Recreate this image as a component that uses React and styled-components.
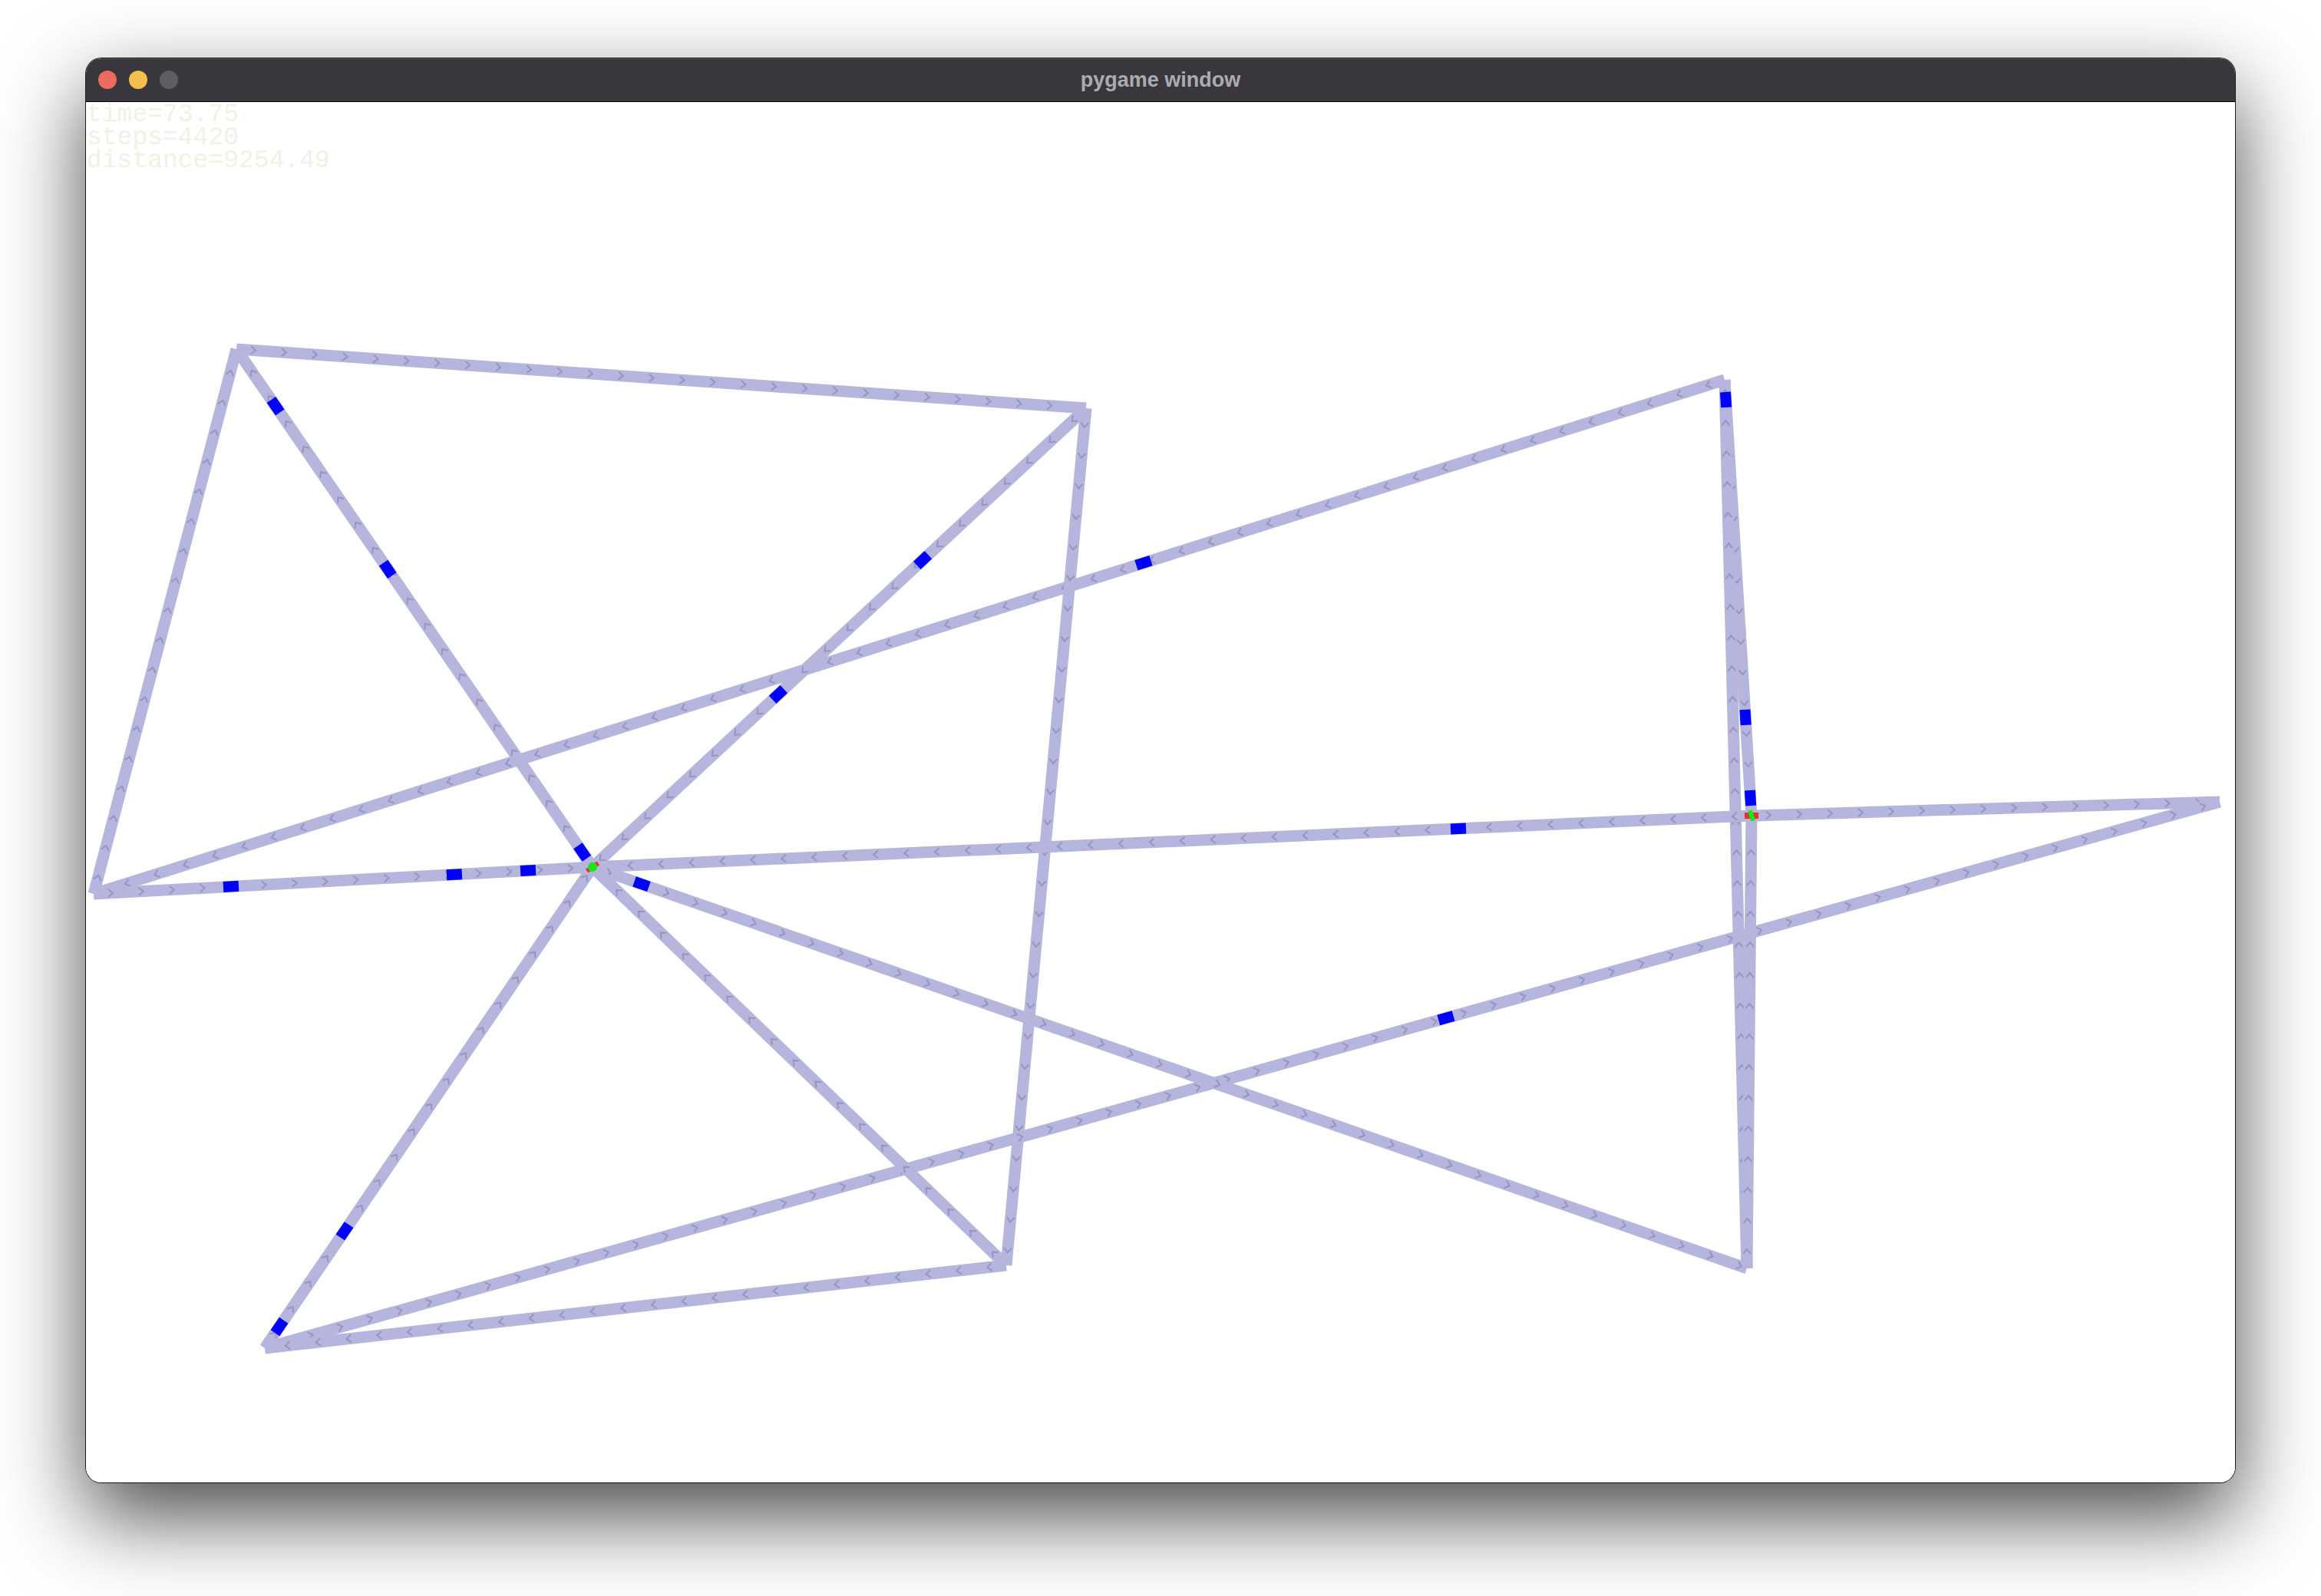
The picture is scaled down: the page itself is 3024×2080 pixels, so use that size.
import styled, { createGlobalStyle } from "styled-components";

const GlobalStyle = createGlobalStyle`
    html, body {
        margin: 0;
        padding: 0;
        background: #ffffff;
    }
`;

const Desktop = styled.div`
    width: 3024px;
    height: 2080px;
    box-sizing: border-box;
    padding: 76px 112px 148px;
    background: #ffffff;
    overflow: hidden;
`;

const Window = styled.div`
    width: 2800px;
    height: 1856px;
    border-radius: 20px;
    overflow: hidden;
    display: flex;
    flex-direction: column;
    background: #ffffff;
    box-shadow: 0 0 0 1px rgba(0, 0, 0, 0.85), 0 44px 110px rgba(0, 0, 0, 0.72);
`;

const TitleBar = styled.div`
    height: 56px;
    flex: none;
    display: grid;
    grid-template-columns: 1fr auto 1fr;
    align-items: center;
    padding: 0 16px;
    background: #39373d;
    border-bottom: 1px solid #0b0b0c;
    box-shadow: inset 0 1px 0 rgba(255, 255, 255, 0.12);
`;

const Lights = styled.div`
    display: flex;
    gap: 16px;
`;

const Light = styled.span`
    width: 24px;
    height: 24px;
    border-radius: 50%;
    background: ${(props) => props.color};
`;

const Title = styled.div`
    font-family: "Liberation Sans", Arial, sans-serif;
    font-weight: 700;
    font-size: 27px;
    color: #adabb1;
`;

const Canvas = styled.div`
    flex: 1;
    position: relative;
    background: #ffffff;
`;

const Stats = styled.pre`
    position: absolute;
    left: 1px;
    top: 2px;
    margin: 0;
    font-family: "Liberation Mono", "Courier New", monospace;
    font-size: 33px;
    line-height: 30px;
    color: #f2f2e4;
`;

const Graph = styled.svg`
    display: block;
    width: 100%;
    height: 100%;
`;

const nodes = {
    A: [308, 455],
    B: [1415, 532],
    C: [122, 1165],
    D: [772, 1130],
    E: [2247, 495],
    F: [2282, 1063],
    G: [2892, 1045],
    H: [1311, 1649],
    I: [2276, 1653],
    J: [345, 1757],
};

// from -> to (chevrons point along it)
const edges = [
    ["A", "B"],
    ["C", "A"],
    ["D", "A"],
    ["E", "C"],
    ["C", "D"],
    ["B", "D"],
    ["B", "H"],
    ["E", "F"],
    ["I", "E"],
    ["I", "F"],
    ["F", "D"],
    ["F", "G"],
    ["J", "G"],
    ["D", "I"],
    ["H", "D"],
    ["J", "D"],
    ["H", "J"],
];

const cars = [
    ["D", "A", 361, 528],
    ["D", "A", 505, 742],
    ["D", "A", 758, 1111],
    ["B", "D", 1203, 731],
    ["B", "D", 1014, 905],
    ["E", "C", 1491, 737],
    ["E", "F", 2248, 521],
    ["E", "F", 2272, 935],
    ["E", "F", 2281, 1040],
    ["C", "D", 301, 1157],
    ["C", "D", 592, 1142],
    ["C", "D", 688, 1134],
    ["D", "I", 836, 1152],
    ["F", "D", 1900, 1080],
    ["J", "G", 1884, 1327],
    ["J", "D", 447, 1603],
    ["J", "D", 364, 1729],
];

const LANE = "#b5b5dd";
const ARROW = "rgba(105, 105, 150, 0.42)";

const geom = (a, b) => {
    const [x1, y1] = nodes[a];
    const [x2, y2] = nodes[b];
    const dx = x2 - x1;
    const dy = y2 - y1;
    const len = Math.hypot(dx, dy);
    return { x1, y1, dx, dy, len, deg: (Math.atan2(dy, dx) * 180) / Math.PI };
};

const Lane = ({ from, to }) => {
    const g = geom(from, to);
    const marks = [];
    for (let s = 22; s < g.len - 10; s += 40) {
        const x = g.x1 + (g.dx * s) / g.len;
        const y = g.y1 + (g.dy * s) / g.len;
        marks.push(
            <polyline
                key={s}
                points="-3,-5 3,0 -3,5"
                transform={`translate(${x} ${y}) rotate(${g.deg})`}
                fill="none"
                stroke={ARROW}
                strokeWidth="2"
            />
        );
    }
    return (
        <g>
            <line
                x1={g.x1}
                y1={g.y1}
                x2={g.x1 + g.dx}
                y2={g.y1 + g.dy}
                stroke={LANE}
                strokeWidth="15"
            />
            {marks}
        </g>
    );
};

const Car = ({ from, to, x, y }) => {
    const g = geom(from, to);
    // snap onto the lane
    const t = ((x - g.x1) * g.dx + (y - g.y1) * g.dy) / (g.len * g.len);
    const cx = g.x1 + g.dx * t;
    const cy = g.y1 + g.dy * t;
    return (
        <rect
            x="-10"
            y="-7"
            width="20"
            height="14"
            fill="#0000ff"
            transform={`translate(${cx} ${cy}) rotate(${g.deg})`}
        />
    );
};

const App = () => {
    return (
        <Desktop>
            <GlobalStyle />
            <Window>
                <TitleBar>
                    <Lights>
                        <Light color="#ed6a5e" />
                        <Light color="#f4bf4f" />
                        <Light color="#5f5d63" />
                    </Lights>
                    <Title>pygame window</Title>
                    <span />
                </TitleBar>
                <Canvas>
                    <Graph viewBox="112 133 2800 1799" preserveAspectRatio="none">
                        {edges.map(([a, b]) => (
                            <Lane key={a + b} from={a} to={b} />
                        ))}
                        {cars.map(([a, b, x, y], i) => (
                            <Car key={i} from={a} to={b} x={x} y={y} />
                        ))}
                        {/* signal at the centre node */}
                        <g transform="translate(772 1130) rotate(-35)">
                            <rect x="-9" y="-3" width="18" height="6" fill="#e53030" />
                            <ellipse cx="0" cy="0" rx="6" ry="6" fill="#19e619" />
                        </g>
                        {/* signal at the right node */}
                        <g transform="translate(2282 1063)">
                            <rect x="-9" y="-4" width="18" height="8" fill="#e53030" />
                            <rect x="-3" y="-7" width="6" height="14" fill="#19e619" transform="rotate(-20)" />
                        </g>
                    </Graph>
                    <Stats>{"time=73.75\nsteps=4420\ndistance=9254.49"}</Stats>
                </Canvas>
            </Window>
        </Desktop>
    );
};

export default App;
